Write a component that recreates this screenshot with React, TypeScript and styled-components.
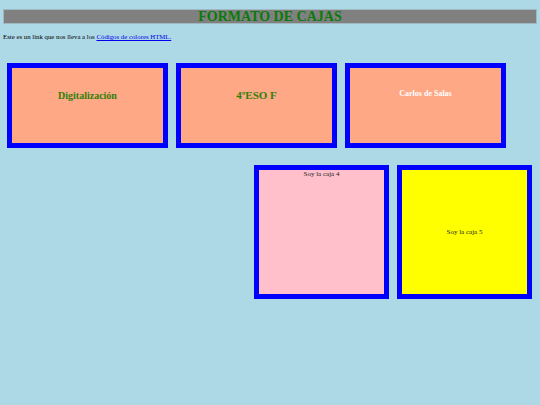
import styled, { createGlobalStyle } from "styled-components";

const GlobalStyle = createGlobalStyle`
  html, body {
    margin: 0;
    padding: 0;
    background: #add8e6;
    font-family: "Liberation Serif", "Times New Roman", serif;
  }
`;

const Page = styled.div`
  width: 540px;
  height: 405px;
  padding-top: 9px;
  box-sizing: border-box;
`;

const Title = styled.h1`
  margin: 0 3px;
  height: 15px;
  background: #808080;
  border: 1px solid #9fb9c2;
  box-sizing: border-box;
  color: #0b7a0b;
  font-size: 14px;
  line-height: 13px;
  font-weight: bold;
  text-align: center;
`;

const Intro = styled.p`
  margin: 9px 3px 0;
  font-size: 6.8px;
  line-height: 8px;
  color: #000;

  a {
    color: #0000ee;
    text-decoration: underline;
  }
`;

const TopRow = styled.div`
  display: flex;
  gap: 8px;
  margin-top: 22px;
  padding-left: 7px;
`;

const BottomRow = styled.div`
  display: flex;
  justify-content: flex-end;
  gap: 8px;
  margin-top: 17px;
  padding-right: 8px;
`;

const Box = styled.div<{ $bg: string; $w: number; $h: number }>`
  width: ${(p) => p.$w}px;
  height: ${(p) => p.$h}px;
  box-sizing: border-box;
  border: 5px solid #0000ff;
  background: ${(p) => p.$bg};
  display: flex;
  flex-direction: column;
  align-items: center;
  text-align: center;
`;

const CenteredBox = styled(Box)`
  justify-content: center;
`;

const BoxLabel = styled.span<{ $size: number; $color: string; $top: number; $bold?: boolean }>`
  margin-top: ${(p) => p.$top}px;
  font-size: ${(p) => p.$size}px;
  line-height: ${(p) => p.$size + 2}px;
  color: ${(p) => p.$color};
  font-weight: ${(p) => (p.$bold ? "bold" : "normal")};
`;

export default function App() {
  return (
    <>
      <GlobalStyle />
      <Page>
        <Title>FORMATO DE CAJAS</Title>
        <Intro>
          Este es un link que nos lleva a los <a href="#">Códigos de colores HTML.</a>
        </Intro>
        <TopRow>
          <Box $bg="#ffa886" $w={161} $h={85}>
            <BoxLabel $size={10} $color="#2f7f0a" $top={22} $bold>
              Digitalización
            </BoxLabel>
          </Box>
          <Box $bg="#ffa886" $w={161} $h={85}>
            <BoxLabel $size={11} $color="#2f7f0a" $top={21} $bold>
              4ºESO F
            </BoxLabel>
          </Box>
          <Box $bg="#ffa886" $w={161} $h={85}>
            <BoxLabel $size={8} $color="#ffffff" $top={21} $bold>
              Carlos de Salas
            </BoxLabel>
          </Box>
        </TopRow>
        <BottomRow>
          <Box $bg="#ffc0cb" $w={135} $h={134}>
            <BoxLabel $size={7} $color="#222" $top={0}>
              Soy la caja 4
            </BoxLabel>
          </Box>
          <CenteredBox $bg="#ffff00" $w={135} $h={134}>
            <BoxLabel $size={7} $color="#222" $top={0}>
              Soy la caja 5
            </BoxLabel>
          </CenteredBox>
        </BottomRow>
      </Page>
    </>
  );
}
